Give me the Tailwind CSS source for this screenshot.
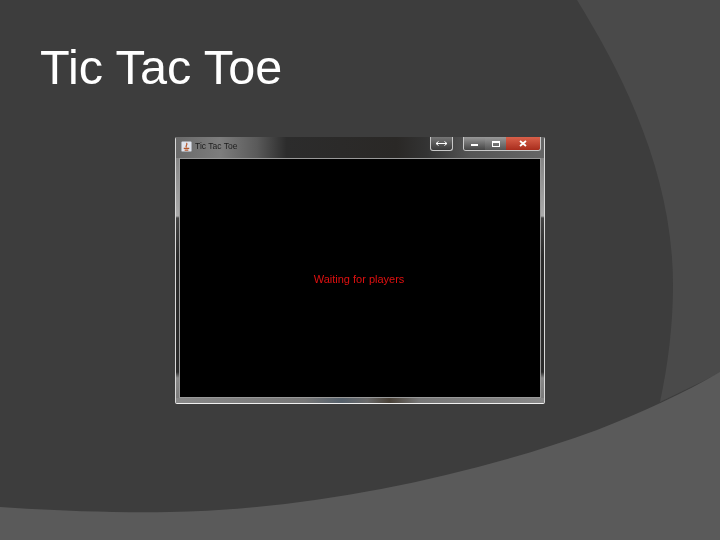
<!DOCTYPE html>
<html lang="en">
  <head>
    <meta charset="UTF-8" />
    <title>Tic Tac Toe</title>
    <script src="https://cdn.jsdelivr.net/npm/@tailwindcss/browser@4"></script>
  </head>
  <body class="bg-[#3d3d3d]">
    <div class="relative w-[720px] h-[540px] overflow-hidden bg-[#3d3d3d] font-['Liberation_Sans',sans-serif]">
      <!-- background swooshes -->
      <svg class="absolute inset-0" width="720" height="540" viewBox="0 0 720 540">
        <path d="M577 0 C 620 70, 673 170, 673 285 C 673 325, 668 365, 660 402 L 720 373 L 720 0 Z" fill="#4a4a4a" />
        <path d="M0 507 C 60 511, 120 513, 170 512 C 300 510, 460 480, 597 430 C 640 413, 685 393, 720 372 L 720 540 L 0 540 Z" fill="#5a5a5a" />
      </svg>

      <div class="relative px-[40px] pt-[39px]">
        <h1 class="text-[48.6px] leading-[56px] text-white">Tic Tac Toe</h1>

        <!-- java window -->
        <div class="mt-[42px] ml-[135px] w-[370px] h-[267px] flex flex-col rounded-[2px] border-x border-b border-x-[#d8d8d8] border-b-[#f0f0f0] bg-[linear-gradient(to_bottom,#777_0,#aaa_79px,#444_81px,#2a2a2a_120px,#2a2a2a_235px,#888_241px,#777_100%)]">
          <div class="h-[21px] flex bg-[linear-gradient(to_right,#6a6a6a_0,#7d7d7d_12%,#5a5a5a_22%,#2c2c2c_30%,#2a2826_60%,#333_68%,#555_80%,#666_100%)]">
            <div class="flex items-center gap-[3px] pl-[5px] h-[18px]">
              <svg width="11" height="11" viewBox="0 0 12 12">
                <rect x="0.5" y="0.5" width="11" height="11" rx="1" fill="#dfe4ee" />
                <path d="M6 2 C 8 4, 4 5, 6 7 M3 8 H9 M4 10 H8" stroke="#b5562a" stroke-width="1.3" fill="none" />
              </svg>
              <span class="text-[8.5px] text-[#1c1c1c] blur-[0.4px]">Tic Tac Toe</span>
            </div>
            <div class="ml-auto flex items-start pr-[3px]">
              <div class="w-[23px] h-[14px] mr-[10px] flex items-center justify-center rounded-b-[3px] border-x border-b border-[#c8c8c8] bg-gradient-to-b from-[#777] to-[#3a3a3a]">
                <svg width="13" height="7" viewBox="0 0 13 7"><path d="M1 3.5 H12 M3.5 1.5 L1 3.5 L3.5 5.5 M9.5 1.5 L12 3.5 L9.5 5.5" stroke="#fff" fill="none" /></svg>
              </div>
              <div class="flex h-[14px] rounded-b-[3px] border-x border-b border-[#c8c8c8] overflow-hidden">
                <div class="w-[21px] flex items-center justify-center bg-gradient-to-b from-[#999] to-[#444]">
                  <div class="w-[7px] h-[2px] mt-[3px] bg-white"></div>
                </div>
                <div class="w-[21px] flex items-center justify-center bg-gradient-to-b from-[#999] to-[#555]">
                  <div class="w-[8px] h-[6px] border border-t-2 border-white"></div>
                </div>
                <div class="w-[34px] flex items-center justify-center bg-gradient-to-b from-[#d9604a] to-[#a82c1c]">
                  <svg width="8" height="7" viewBox="0 0 8 7"><path d="M1 1 L7 6 M7 1 L1 6" stroke="#fff" stroke-width="1.8" /></svg>
                </div>
              </div>
            </div>
          </div>
          <div class="flex-1 mx-[3px] bg-black border border-[#999] flex items-center justify-center">
            <span class="mr-[2px] mt-[2px] text-[11px] leading-none text-[#e01010] blur-[0.3px]">Waiting for players</span>
          </div>
          <div class="h-[5px] bg-[linear-gradient(to_right,#888_0,#777_35%,#56616c_45%,#6a6a6a_52%,#4a4238_58%,#777_66%,#888_100%)]"></div>
        </div>
      </div>
    </div>
  </body>
</html>
